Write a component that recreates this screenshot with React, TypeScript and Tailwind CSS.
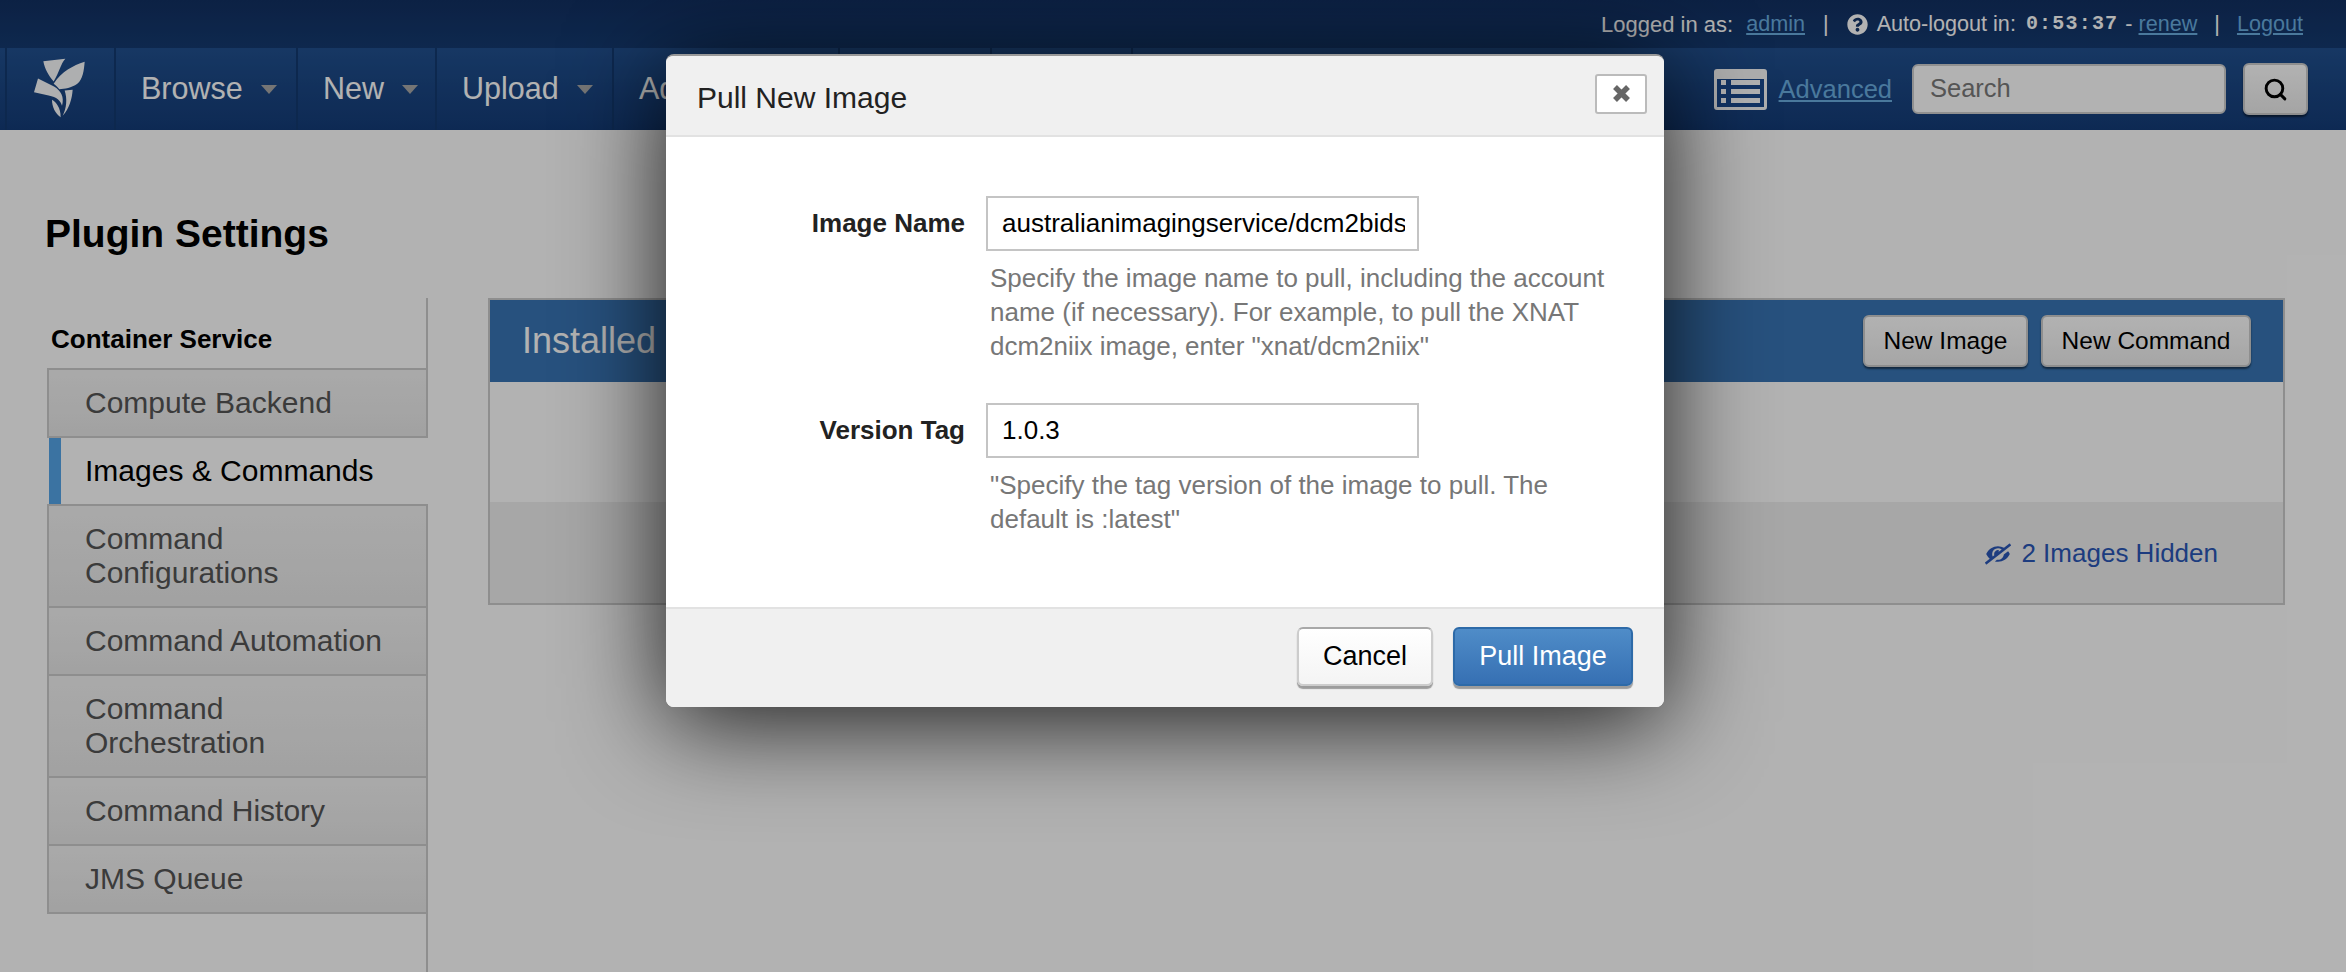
import { Search } from 'lucide-react';
import { FaEyeSlash, FaQuestionCircle } from 'react-icons/fa';

const navItems = [
    { label: 'Browse', width: 'w-[182px]' },
    { label: 'New', width: 'w-[139px]' },
    { label: 'Upload', width: 'w-[177px]' },
    { label: 'Administer', width: 'w-[226px]' },
    { label: '', width: 'w-[152px]' },
    { label: '', width: 'w-[141px]' },
];

const sideItems = [
    { label: 'Compute Backend', height: 'h-[70px]', last: true },
    { label: 'Images & Commands', height: 'h-[66px]', active: true },
    { label: 'Command Configurations', height: 'h-[102px]' },
    { label: 'Command Automation', height: 'h-[68px]' },
    { label: 'Command Orchestration', height: 'h-[102px]' },
    { label: 'Command History', height: 'h-[68px]' },
    { label: 'JMS Queue', height: 'h-[68px]' },
];

function Logo() {
    return (
        <svg width="55" height="62" viewBox="100 80 165 185" fill="#ffffff" fillOpacity="0.98" className="mb-[2px] mr-[2px]">
            <path d="M134 92 L200 85 C186 100 182 125 165 153 C150 135 138 115 134 92 Z" />
            <path d="M258 94 C256 120 252 148 236 160 C218 172 198 176 182 176 C176 170 170 163 165 160 C190 122 222 106 258 94 Z" />
            <path d="M118 144 L166 168 C186 180 198 198 190 226 C186 210 174 200 150 195 L106 185 Z" />
            <path d="M198 180 L222 178 C220 205 212 235 192 256 C204 232 206 205 198 180 Z" />
            <path d="M160 208 C172 214 186 232 186 260 C170 250 160 230 160 208 Z" />
        </svg>
    );
}

function Field({ label, value, hint, className }: { label: string; value: string; hint: string[]; className: string }) {
    return (
        <div className={`flex ${className}`}>
            <div className="w-[320px] pr-[21px] text-right text-[26px] font-bold leading-[54px] text-[#222222]">{label}</div>
            <div>
                <div className="h-[55px] w-[433px] border-2 border-[#c4c4c4] bg-white pl-[14px] pr-[12px] text-[26px] leading-[51px] text-black">
                    <div className="overflow-hidden whitespace-nowrap">{value}</div>
                </div>
                <div className="mt-[10px] pl-[4px] text-[26px] leading-[34px] text-[#777777]">
                    {hint.map((line) => (
                        <div key={line} className="whitespace-nowrap">{line}</div>
                    ))}
                </div>
            </div>
        </div>
    );
}

export default function App() {
    return (
        <div className="relative h-[972px] w-[2346px] overflow-hidden bg-white font-['Liberation_Sans',Arial,sans-serif]">
            {/* top bar */}
            <div className="flex h-[48px] items-center justify-end bg-[linear-gradient(#123062,#153a70)] pr-[43px] text-[21.6px] text-white">
                <span className="text-[22px]">Logged in as:</span>
                <a className="ml-[13px] text-[#6aaee0] underline">admin</a>
                <span className="ml-[18px]">|</span>
                <FaQuestionCircle className="ml-[18px] h-[21px] w-[21px]" />
                <span className="ml-[9px]">Auto-logout in:</span>
                <span className="ml-[10px] font-['Liberation_Mono',monospace] text-[20px] font-bold tracking-[1.2px]">0:53:37</span>
                <span className="ml-[7px]">-</span>
                <a className="ml-[6px] text-[#6aaee0] underline">renew</a>
                <span className="ml-[17px]">|</span>
                <a className="ml-[17px] text-[#6aaee0] underline">Logout</a>
            </div>

            {/* nav */}
            <div className="flex h-[82px] bg-[linear-gradient(#21508f,#143c78)]">
                <div className="w-[7px] border-r-2 border-[#143a70]" />
                <div className="flex w-[109px] items-center justify-center border-r-2 border-[#143a70]">
                    <Logo />
                </div>
                {navItems.map((item, i) => (
                    <div key={i} className={`flex ${item.width} items-center border-r-2 border-[#143a70] pl-[25px] text-[30.5px] text-white`}>
                        {item.label}
                        <span className="ml-[18px] mt-[1px] h-0 w-0 border-x-[8px] border-t-[9px] border-x-transparent border-t-[#a8a8a8]" />
                    </div>
                ))}
                <div className="ml-auto flex items-center pr-[38px]">
                    <div className="flex h-[41px] w-[53px] flex-col justify-center gap-[4px] rounded-[3px] border-[3px] border-[#fafafa] bg-[#1b4a8e] px-[4px] pt-[8px] pb-[3px] shadow-[inset_0_7px_0_#fafafa]">
                        {[0, 1, 2].map((row) => (
                            <div key={row} className="flex gap-[5px]">
                                <span className="h-[5px] w-[5px] bg-white" />
                                <span className="h-[5px] flex-1 bg-white" />
                            </div>
                        ))}
                    </div>
                    <a className="ml-[12px] text-[25.5px] text-[#6aaee0] underline">Advanced</a>
                    <div className="ml-[20px] flex h-[50px] w-[314px] items-center rounded-[6px] border-2 border-[#cfcfcf] bg-white pb-[2px] pl-[16px] text-[25.5px] text-[#7a7a7a]">
                        Search
                    </div>
                    <div className="ml-[17px] flex h-[52px] w-[65px] items-center justify-center rounded-[6px] border-2 border-[#cccccc] bg-[linear-gradient(#ffffff,#ececec)] shadow-[0_2px_2px_rgba(0,0,0,0.5)]">
                        <Search size={25} strokeWidth={2.8} className="text-black" />
                    </div>
                </div>
            </div>

            {/* page */}
            <div className="pl-[45px]">
                <h1 className="pt-[81px] text-[39px] leading-[46px] font-bold text-black">Plugin Settings</h1>
                <div className="mt-[41px] flex">
                    <div className="relative h-[700px] w-[383px] border-r-2 border-[#cccccc]">
                        <div className="pl-[6px] pt-[26px] text-[26px] leading-[30px] font-bold text-black">Container Service</div>
                        <div className="ml-[2px] mt-[14px] w-[381px]">
                            {sideItems.map((item) =>
                                item.active ? (
                                    <div key={item.label} className={`${item.height} ml-[2px] mr-[-2px] flex items-center border-l-[12px] border-[#55a5e8] bg-white pl-[24px] text-[30px] leading-[34px] text-black`}>
                                        {item.label}
                                    </div>
                                ) : (
                                    <div key={item.label} className={`${item.height} flex items-center border-2 ${item.last ? '' : 'border-b-0'} border-[#cccccc] bg-[linear-gradient(#f3f3f3,#e8e8e8)] pl-[36px] pr-[10px] text-[30px] leading-[34px] text-[#555555]`}>
                                        <span className={item.label === 'Command Automation' ? 'whitespace-nowrap' : 'max-w-[290px]'}>{item.label}</span>
                                    </div>
                                ),
                            )}
                            <div className="h-[2px] bg-[#cccccc]" />
                        </div>
                    </div>

                    <div className="ml-[60px] h-[307px] w-[1797px] border-2 border-[#cccccc]">
                        <div className="flex h-[82px] items-center justify-between bg-[#3875b5] pl-[32px] pr-[32px]">
                            <div className="text-[36px] text-white">Installed</div>
                            <div className="flex gap-[13px]">
                                <div className="flex h-[52px] w-[165px] items-center justify-center rounded-[6px] border-2 border-[#cccccc] bg-[linear-gradient(#ffffff,#eeeeee)] text-[24.5px] text-black shadow-[0_2px_2px_rgba(0,0,0,0.5)]">New Image</div>
                                <div className="flex h-[52px] w-[210px] items-center justify-center rounded-[6px] border-2 border-[#cccccc] bg-[linear-gradient(#ffffff,#eeeeee)] text-[24.5px] text-black shadow-[0_2px_2px_rgba(0,0,0,0.5)]">New Command</div>
                            </div>
                        </div>
                        <div className="h-[120px]" />
                        <div className="flex h-[101px] items-center justify-end bg-[#efefef] pr-[65px] pt-[2px] text-[26px] text-[#2a57b7]">
                            <FaEyeSlash className="mr-[10px] h-[22px] w-[26px] -scale-x-100" />
                            2 Images Hidden
                        </div>
                    </div>
                </div>
            </div>

            {/* overlay + dialog */}
            <div className="absolute inset-0 bg-black/30" />
            <div className="absolute left-[666px] top-[54px] w-[998px] overflow-hidden rounded-[8px] border-t-2 border-[#999999] bg-white shadow-[0_15px_100px_rgba(0,0,0,0.85)]">
                <div className="flex h-[81px] items-center justify-between border-b-2 border-[#e2e2e2] bg-[#f0f0f0] pl-[31px] pr-[17px]">
                    <div className="pt-[4px] text-[30px] text-[#222222]">Pull New Image</div>
                    <div className="mb-[4px] flex h-[40px] w-[52px] items-center justify-center rounded-[3px] border-2 border-[#bbbbbb] bg-white">
                        <svg width="17" height="17" viewBox="0 0 17 17" stroke="#666666" strokeWidth="5.5">
                            <path d="M2 2 L15 15 M15 2 L2 15" />
                        </svg>
                    </div>
                </div>
                <div className="h-[470px]">
                    <Field className="pt-[59px]" label="Image Name" value="australianimagingservice/dcm2bids" hint={['Specify the image name to pull, including the account', 'name (if necessary). For example, to pull the XNAT', 'dcm2niix image, enter "xnat/dcm2niix"']} />
                    <Field className="pt-[40px]" label="Version Tag" value="1.0.3" hint={['"Specify the tag version of the image to pull. The', 'default is :latest"']} />
                </div>
                <div className="flex h-[100px] items-start justify-end gap-[20px] border-t-2 border-[#e2e2e2] bg-[#f0f0f0] pr-[31px] pt-[18px]">
                    <div className="flex h-[59px] w-[136px] items-center justify-center rounded-[6px] border-2 border-[#cccccc] border-t-[#a8a8a8] bg-[linear-gradient(#ffffff,#f4f4f4)] text-[27px] text-black shadow-[0_3px_1px_rgba(0,0,0,0.35)]">Cancel</div>
                    <div className="flex h-[59px] w-[180px] items-center justify-center rounded-[6px] border-2 border-[#2d6aa8] bg-[linear-gradient(#4f8cc8,#3670b3)] text-[27px] text-white shadow-[0_3px_1px_rgba(0,0,0,0.35)]">Pull Image</div>
                </div>
            </div>
        </div>
    );
}
